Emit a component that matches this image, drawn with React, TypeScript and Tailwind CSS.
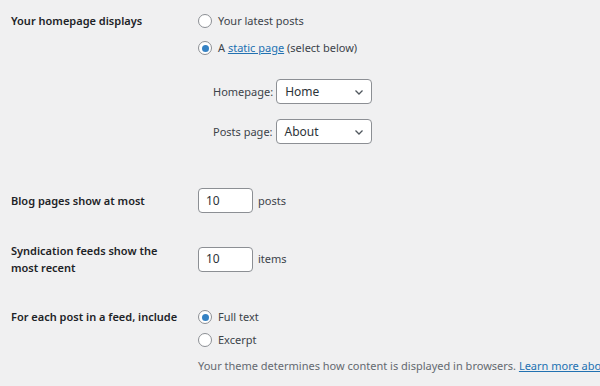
const font = { fontFamily: '"Noto Sans", "Open Sans", sans-serif' };

function Radio({ checked, children }: { checked?: boolean; children: React.ReactNode }) {
  return (
    <label className="flex items-center h-[18px] gap-[6px]">
      <span className="w-[14px] h-[14px] rounded-full border border-[#8c8f94] bg-white flex items-center justify-center shrink-0">
        {checked && <span className="w-[7px] h-[7px] rounded-full bg-[#3582c4]" />}
      </span>
      <span className="text-[#3c434a]">{children}</span>
    </label>
  );
}

function Select({ value, width }: { value: string; width: string }) {
  return (
    <div className={`h-[25px] ${width} flex items-center justify-between bg-white border border-[#8c8f94] rounded-[4px] pl-[8px] pr-[7px] text-[12px] text-[#2c3338]`}>
      <span>{value}</span>
      <svg width="10" height="10" viewBox="0 0 10 10" fill="none">
        <path d="M1.5 3.5 L5 7 L8.5 3.5" stroke="#50575e" strokeWidth="1.3" />
      </svg>
    </div>
  );
}

function NumberInput() {
  return (
    <div className="h-[25px] w-[55px] flex items-center bg-white border border-[#8c8f94] rounded-[4px] pl-[7px] text-[12px] text-[#2c3338]">
      10
    </div>
  );
}

export default function App() {
  return (
    <div className="w-[600px] h-[386px] bg-[#f0f0f1] overflow-hidden text-[11px] leading-[18px] pl-[11px]" style={font}>
      {/* Homepage displays */}
      <div className="flex">
        <div className="w-[187px] shrink-0 pt-[12px] font-semibold text-[#1d2327]">Your homepage displays</div>
        <div className="pt-[12px] flex flex-col">
          <div className="flex flex-col gap-[9px]">
            <Radio>Your latest posts</Radio>
            <Radio checked>
              A <a className="text-[#2271b1] underline">static page</a> (select below)
            </Radio>
          </div>
          <div className="flex flex-col gap-[15px] pl-[15px] mt-[22px] text-[#3c434a]">
            <div className="flex items-center gap-[3px]">
              <span>Homepage:</span>
              <Select value="Home" width="w-[96px]" />
            </div>
            <div className="flex items-center gap-[3px]">
              <span>Posts page:</span>
              <Select value="About" width="w-[96px]" />
            </div>
          </div>
        </div>
      </div>

      {/* Blog pages */}
      <div className="flex items-center mt-[44px]">
        <div className="w-[187px] shrink-0 font-semibold text-[#1d2327]">Blog pages show at most</div>
        <div className="flex items-center gap-[5px] text-[#3c434a]">
          <NumberInput />
          <span>posts</span>
        </div>
      </div>

      {/* Syndication feeds */}
      <div className="flex items-center mt-[29px]">
        <div className="w-[187px] shrink-0 font-semibold text-[#1d2327] leading-[17px]">
          <div className="w-[155px]">Syndication feeds show the most recent</div>
        </div>
        <div className="flex items-center gap-[5px] text-[#3c434a]">
          <NumberInput />
          <span>items</span>
        </div>
      </div>

      {/* Feed content */}
      <div className="flex mt-[32px]">
        <div className="w-[187px] shrink-0 font-semibold text-[#1d2327]">For each post in a feed, include</div>
        <div className="flex flex-col">
          <div className="flex flex-col gap-[5px]">
            <Radio checked>Full text</Radio>
            <Radio>Excerpt</Radio>
          </div>
          <p className="mt-[8px] whitespace-nowrap text-[#646970]">
            Your theme determines how content is displayed in browsers.{' '}
            <a className="text-[#2271b1] underline">Learn more about feeds</a>
          </p>
        </div>
      </div>
    </div>
  );
}
